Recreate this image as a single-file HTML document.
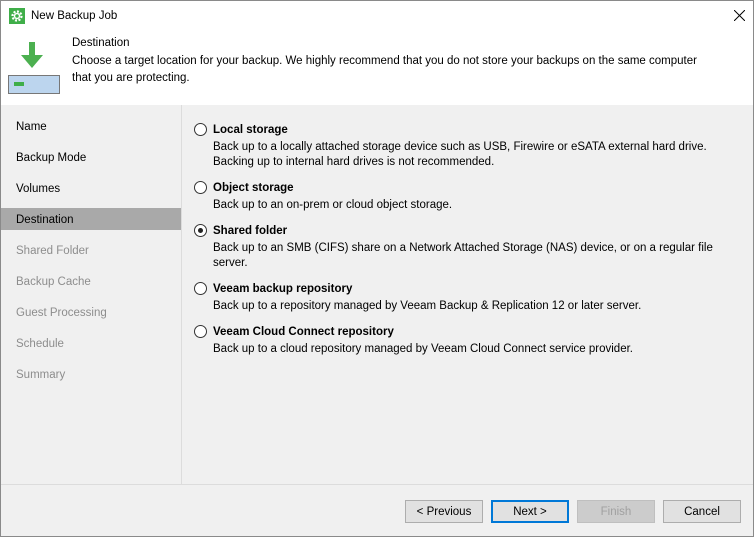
<!DOCTYPE html><html><head><style>
body{margin:0;width:754px;height:537px;overflow:hidden;font-family:"Liberation Sans",sans-serif;font-size:11.5px;color:#000}
.win{position:absolute;left:0;top:0;width:752px;height:535px;border:1px solid #8a8a8a;background:#f0f0f0}
.title{position:absolute;left:0;top:0;width:752px;height:31px;background:#fff}
.hdr{position:absolute;left:0;top:31px;width:752px;height:73px;background:#fff}
.t{position:absolute;white-space:nowrap;padding-top:1px}
.left{position:absolute;left:0;top:104px;width:180px;height:379px;border-right:1px solid #dcdcdc}
.nav{position:absolute;left:15px}
.sel{position:absolute;left:0;top:103px;width:180px;height:22px;background:#a9a9a9}
.radio{position:absolute;left:193px;width:11px;height:11px;border:1px solid #333;border-radius:50%;background:#fff}
.b{font-weight:bold}
.btn{position:absolute;top:499px;width:76px;height:21px;border:1px solid #adadad;background:#e1e1e1;text-align:center;line-height:22px}
</style></head><body><div class="win">
<div class="title">
<svg style="position:absolute;left:8px;top:7px" width="16" height="16"><rect width="16" height="16" fill="#3fae49"/><circle cx="8" cy="8" r="4.5" fill="none" stroke="#fff" stroke-width="2.2" stroke-dasharray="2 1.5"/><circle cx="8" cy="8" r="2.5" fill="none" stroke="#fff" stroke-width="1.5"/></svg>
<div class="t" style="left:30px;top:8px">New Backup Job</div>
<svg style="position:absolute;left:733px;top:9px" width="11" height="11"><path d="M0 0L11 11M11 0L0 11" stroke="#000" stroke-width="1"/></svg>
</div>
<div class="hdr">
<svg style="position:absolute;left:7px;top:10px" width="52" height="54"><path d="M21 0h6v13h8l-11 13-11-13h8z" fill="#4cb050" transform="translate(-24,0) scale(2,1) translate(0,0)" style="transform:none"/><rect x="0.5" y="33.5" width="51" height="18" fill="#bcd5ee" stroke="#777"/><rect x="6" y="40" width="10" height="4" fill="#3fae49"/></svg>
<div class="t" style="left:71px;top:4px">Destination</div>
<div class="t" style="left:71px;top:22px">Choose a target location for your backup. We highly recommend that you do not store your backups on the same computer</div>
<div class="t" style="left:71px;top:39px">that you are protecting.</div>
</div>
<div class="left">
<div class="sel"></div>
<div class="t nav" style="top:15px">Name</div>
<div class="t nav" style="top:46px">Backup Mode</div>
<div class="t nav" style="top:77px">Volumes</div>
<div class="t nav" style="top:108px">Destination</div>
<div class="t nav" style="top:139px;color:#8d8d8d">Shared Folder</div>
<div class="t nav" style="top:170px;color:#8d8d8d">Backup Cache</div>
<div class="t nav" style="top:201px;color:#8d8d8d">Guest Processing</div>
<div class="t nav" style="top:232px;color:#8d8d8d">Schedule</div>
<div class="t nav" style="top:263px;color:#8d8d8d">Summary</div>
</div>
<div class="radio" style="top:122px"></div>
<div class="t b" style="left:212px;top:122px">Local storage</div>
<div class="t" style="left:212px;top:139px">Back up to a locally attached storage device such as USB, Firewire or eSATA external hard drive.</div>
<div class="t" style="left:212px;top:154px">Backing up to internal hard drives is not recommended.</div>
<div class="radio" style="top:180px"></div>
<div class="t b" style="left:212px;top:180px">Object storage</div>
<div class="t" style="left:212px;top:197px">Back up to an on-prem or cloud object storage.</div>
<div class="radio" style="top:223px"><div style="position:absolute;left:3px;top:3px;width:5px;height:5px;border-radius:50%;background:#222"></div></div>
<div class="t b" style="left:212px;top:223px">Shared folder</div>
<div class="t" style="left:212px;top:240px">Back up to an SMB (CIFS) share on a Network Attached Storage (NAS) device, or on a regular file</div>
<div class="t" style="left:212px;top:255px">server.</div>
<div class="radio" style="top:281px"></div>
<div class="t b" style="left:212px;top:281px">Veeam backup repository</div>
<div class="t" style="left:212px;top:298px">Back up to a repository managed by Veeam Backup &amp; Replication 12 or later server.</div>
<div class="radio" style="top:324px"></div>
<div class="t b" style="left:212px;top:324px">Veeam Cloud Connect repository</div>
<div class="t" style="left:212px;top:341px">Back up to a cloud repository managed by Veeam Cloud Connect service provider.</div>
<div style="position:absolute;left:0;top:483px;width:752px;height:1px;background:#dcdcdc"></div>
<div class="btn" style="left:404px">&lt; Previous</div>
<div class="btn" style="left:490px;border:2px solid #0078d7;height:19px;line-height:20px;width:74px">Next &gt;</div>
<div class="btn" style="left:576px;background:#ccc;border-color:#bfbfbf;color:#a0a0a0">Finish</div>
<div class="btn" style="left:662px">Cancel</div>
</div></body></html>
